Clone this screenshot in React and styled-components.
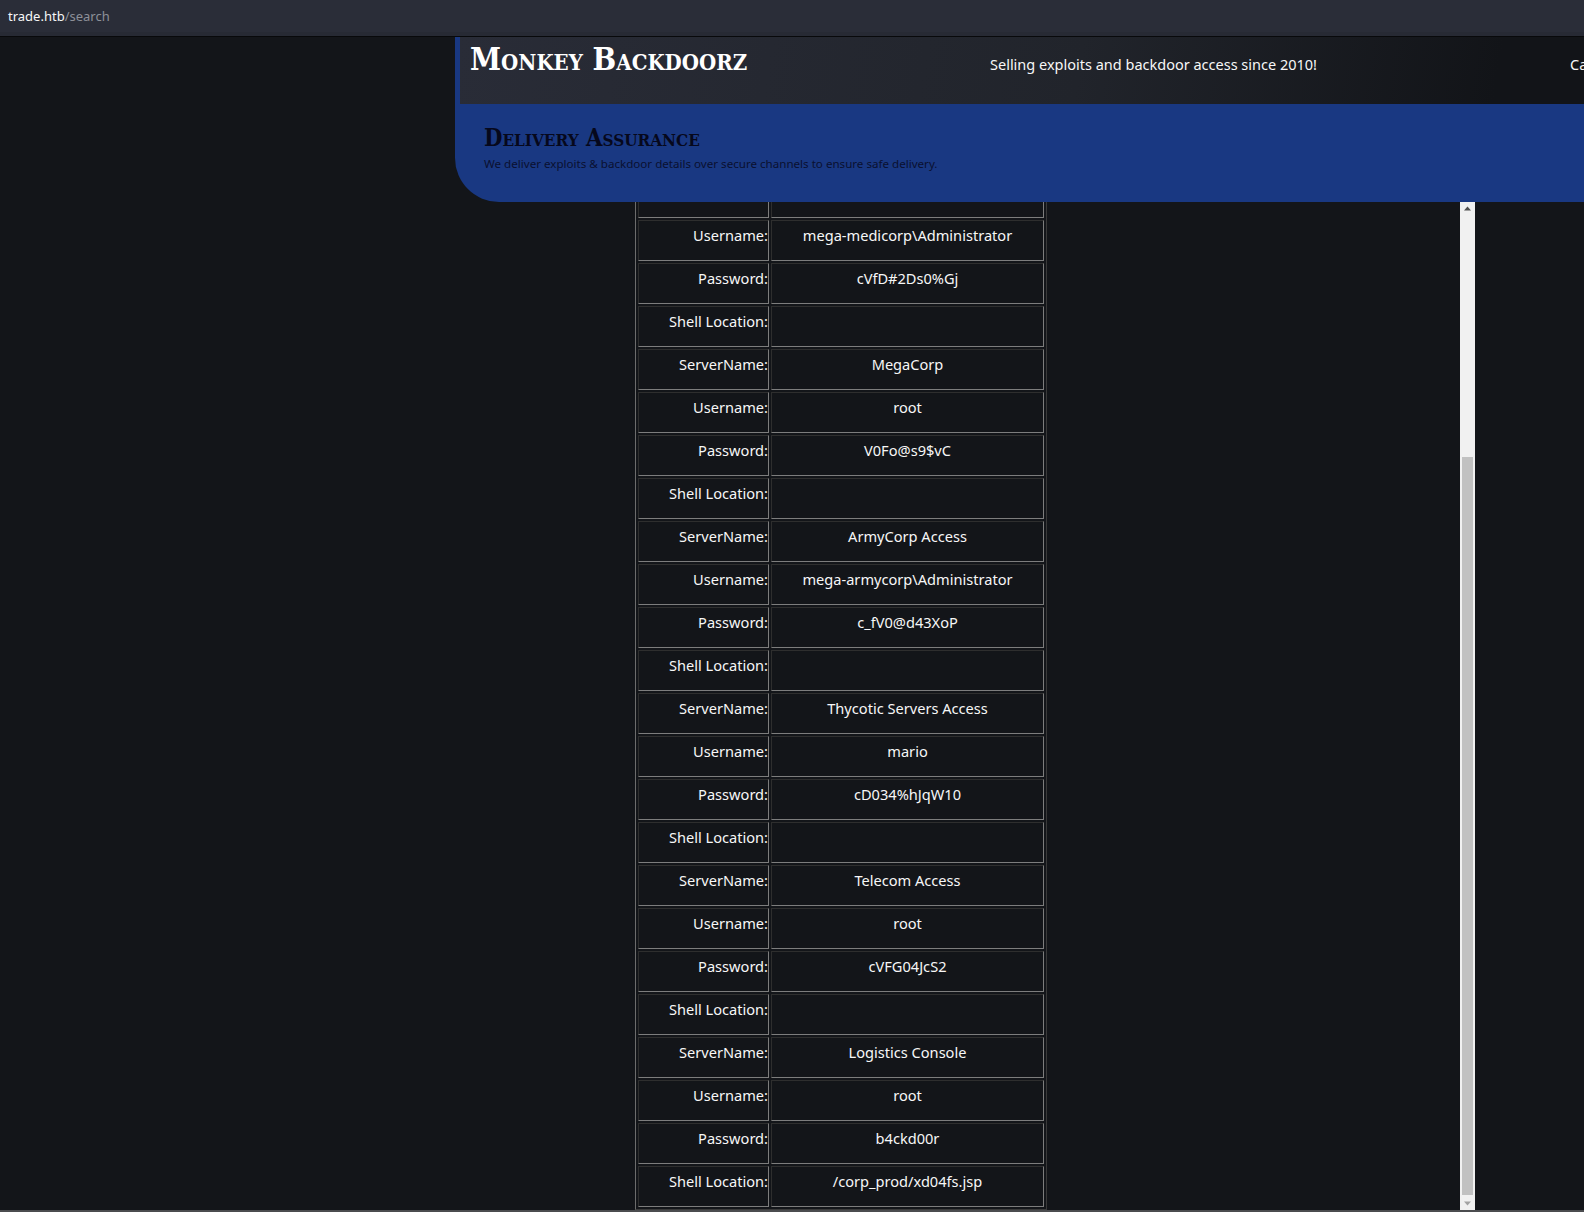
import styled, { createGlobalStyle } from "styled-components";

const GlobalStyle = createGlobalStyle`
  html, body {
    margin: 0;
    padding: 0;
    height: 100%;
    overflow: hidden;
    background: #131519;
  }
`;

const Page = styled.div`
  display: flex;
  flex-direction: column;
  height: 1212px;
  overflow: hidden;
  background: #131519;
  font-family: "Noto Sans", "Open Sans", sans-serif;
`;

const UrlBar = styled.div`
  flex: none;
  height: 31px;
  padding: 0 8px 5px;
  display: flex;
  align-items: center;
  background: linear-gradient(#2a2d38 0, #2a2d38 32px, #272a34 32px);
  border-bottom: 1px solid #08090b;
  font-size: 13px;
  color: #f7f7f7;

  span {
    color: #8d9098;
  }
`;

const Top = styled.div`
  flex: none;
  margin-left: 455px;
  display: flex;
  flex-direction: column;
  overflow: hidden;
`;

const Header = styled.header`
  height: 67px;
  border-left: 5px solid #193882;
  background: linear-gradient(100deg, #292c37 0%, #21242b 55%, #121418 92%);
  display: flex;
  white-space: nowrap;
`;

const SiteTitle = styled.h1`
  margin: 4px 0 0 10px;
  width: 520px;
  flex: none;
  font: bold 31.2px/36px "DejaVu Serif Condensed", "DejaVu Serif", serif;
  font-variant: small-caps;
  color: #fff;
`;

const Motto = styled.div`
  margin-top: 16px;
  width: 580px;
  flex: none;
  font-size: 14.5px;
  line-height: 22px;
  color: #f7f7f7;
`;

const Banner = styled.section`
  height: 98px;
  box-sizing: border-box;
  padding: 19px 0 0 29px;
  background: #193882;
  border-bottom-left-radius: 44px;
`;

const BannerTitle = styled.h2`
  margin: 0;
  font: bold 23.6px/30px "DejaVu Serif Condensed", "DejaVu Serif", serif;
  font-variant: small-caps;
  color: #06081c;
`;

const BannerText = styled.p`
  margin: 2px 0 0;
  font-size: 11.6px;
  line-height: 18px;
  color: #0a1030;
`;

const Results = styled.div`
  flex: 1;
  min-height: 0;
  display: flex;
  border-bottom: 2px solid #4b4c4f;
`;

const TableScroll = styled.div`
  flex: none;
  width: 1460px;
  box-sizing: border-box;
  padding-left: 635px;
  display: flex;
  flex-direction: column;
  justify-content: flex-end;
  overflow: hidden;
`;

const Table = styled.table`
  flex: none;
  width: 412px;
  box-sizing: border-box;
  table-layout: fixed;
  border-collapse: separate;
  border-spacing: 2px;
  border: 1px solid;
  border-color: #6c6c6c #3a3a3a #3a3a3a #6c6c6c;
  font-size: 14.6px;
  color: #f7f7f7;
`;

const Cell = styled.td`
  box-sizing: border-box;
  height: 41px;
  padding: 3px ${(props) => (props.$label ? "0" : "1px")} 0 1px;
  border: 1px solid;
  border-color: #2e2e2e #7d7d7d #7d7d7d #2e2e2e;
  width: ${(props) => (props.$label ? "131px" : "auto")};
  text-align: ${(props) => (props.$label ? "right" : "center")};
  line-height: 22px;
  vertical-align: top;
`;

const Scrollbar = styled.div`
  flex: none;
  width: 15px;
  background: #f1f1f1;
  display: flex;
  flex-direction: column;
  align-items: center;
`;

const ScrollArrow = styled.svg`
  flex: none;
  width: 15px;
  height: 15px;
  fill: ${(props) => props.color};
`;

const ScrollGap = styled.div`
  flex: none;
  height: 240px;
`;

const ScrollThumb = styled.div`
  flex: 1;
  width: 11px;
  background: #c1c1c1;
`;

const rows = [
  ["", ""],
  ["Username:", "mega-medicorp\\Administrator"],
  ["Password:", "cVfD#2Ds0%Gj"],
  ["Shell Location:", ""],
  ["ServerName:", "MegaCorp"],
  ["Username:", "root"],
  ["Password:", "V0Fo@s9$vC"],
  ["Shell Location:", ""],
  ["ServerName:", "ArmyCorp Access"],
  ["Username:", "mega-armycorp\\Administrator"],
  ["Password:", "c_fV0@d43XoP"],
  ["Shell Location:", ""],
  ["ServerName:", "Thycotic Servers Access"],
  ["Username:", "mario"],
  ["Password:", "cD034%hJqW10"],
  ["Shell Location:", ""],
  ["ServerName:", "Telecom Access"],
  ["Username:", "root"],
  ["Password:", "cVFG04JcS2"],
  ["Shell Location:", ""],
  ["ServerName:", "Logistics Console"],
  ["Username:", "root"],
  ["Password:", "b4ckd00r"],
  ["Shell Location:", "/corp_prod/xd04fs.jsp"],
];

const App = () => (
  <Page>
    <GlobalStyle />
    <UrlBar>
      trade.htb<span>/search</span>
    </UrlBar>
    <Top>
      <Header>
        <SiteTitle>Monkey Backdoorz</SiteTitle>
        <Motto>Selling exploits and backdoor access since 2010!</Motto>
        <Motto>Call</Motto>
      </Header>
      <Banner>
        <BannerTitle>Delivery Assurance</BannerTitle>
        <BannerText>
          We deliver exploits &amp; backdoor details over secure channels to
          ensure safe delivery.
        </BannerText>
      </Banner>
    </Top>
    <Results>
      <TableScroll>
        <Table>
          <tbody>
            {rows.map(([label, value], i) => (
              <tr key={i}>
                <Cell $label>{label}</Cell>
                <Cell>{value}</Cell>
              </tr>
            ))}
          </tbody>
        </Table>
      </TableScroll>
      <Scrollbar>
        <ScrollArrow viewBox="0 0 15 15" color="#505050">
          <path d="M7.5 4.5 11 8.5H4z" />
        </ScrollArrow>
        <ScrollGap />
        <ScrollThumb />
        <ScrollArrow viewBox="0 0 15 15" color="#a3a3a3">
          <path d="M4 6.5h7L7.5 10.5z" />
        </ScrollArrow>
      </Scrollbar>
    </Results>
  </Page>
);

export default App;
